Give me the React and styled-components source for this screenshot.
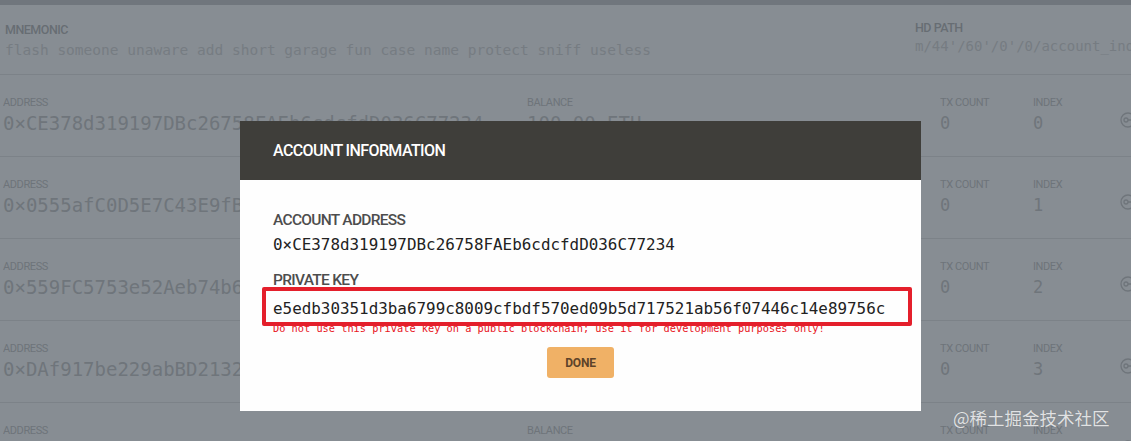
import React from 'react'
import styled, { createGlobalStyle } from 'styled-components'

const GlobalStyle = createGlobalStyle`
  html, body {
    margin: 0;
    padding: 0;
    background: #878d93;
    overflow: hidden;
  }
`

const narrow = `"Roboto", "Liberation Sans", sans-serif`
const mono = `"DejaVu Sans Mono", "Liberation Mono", monospace`

const Page = styled.div`
  position: relative;
  width: 1131px;
  height: 441px;
  overflow: hidden;
  background: #878d93;
  border-top: 5px solid #70767d;
  box-sizing: border-box;
`

const MnemonicBar = styled.div`
  height: 70px;
  display: grid;
  grid-template-columns: 910px 1fr;
  border-bottom: 1px solid #7c8288;
  box-sizing: border-box;
`

const Field = styled.div`
  padding: ${p => p.$top || 0}px 0 0 ${p => p.$left || 0}px;
  white-space: nowrap;
  overflow: hidden;
`

const TopLabel = styled.div`
  font-family: ${narrow};
  font-weight: 500;
  font-size: 12.5px;
  line-height: 15px;
  letter-spacing: -0.5px;
  color: #676d73;
`

const TopValue = styled.div`
  margin-top: ${p => p.$gap || 4}px;
  font-family: ${mono};
  font-size: ${p => p.$size || 14.5}px;
  line-height: 18px;
  color: #767c82;
`

const Row = styled.div`
  height: 82px;
  display: grid;
  grid-template-columns: 524px 413px 93px 87px 1fr;
  padding: 21px 0 0 3px;
  box-sizing: border-box;
  border-bottom: 1px solid #7c8288;
`

const Cell = styled.div`
  white-space: nowrap;
  overflow: hidden;
`

const RowLabel = styled.div`
  font-family: ${narrow};
  font-size: 11px;
  line-height: 13px;
  letter-spacing: -0.4px;
  color: #6e747a;
`

const RowValue = styled.div`
  margin-top: 3px;
  font-family: ${mono};
  font-size: ${p => p.$size || 19}px;
  line-height: 22px;
  color: #6f757b;
`

const KeyIcon = styled.svg`
  margin-top: 16px;
  width: 16px;
  height: 16px;
`

const Modal = styled.div`
  position: absolute;
  left: 240px;
  top: 116px;
  width: 681px;
  background: #fefefe;
`

const ModalHeader = styled.div`
  height: 59px;
  padding: 0 33px;
  display: flex;
  align-items: center;
  background: #3f3e3a;
  color: #ffffff;
  font-family: ${narrow};
  font-weight: 500;
  font-size: 16px;
  letter-spacing: -0.6px;
`

const ModalBody = styled.div`
  padding: 30px 33px 33px;
  display: flex;
  flex-direction: column;
`

const InfoLabel = styled.div`
  margin-top: ${p => p.$gap || 0}px;
  font-family: ${narrow};
  font-weight: 500;
  font-size: 15.5px;
  line-height: 20px;
  letter-spacing: -0.7px;
  color: #4d4d4d;
`

const InfoValue = styled.div`
  margin-top: ${p => p.$gap || 3}px;
  font-family: ${mono};
  font-size: 15.9px;
  line-height: 24px;
  color: #222222;
  white-space: nowrap;
`

const KeyBlock = styled.div`
  position: relative;
  margin-top: 4px;
`

const Highlight = styled.div`
  position: absolute;
  left: -11px;
  top: -7px;
  width: 650px;
  height: 39px;
  border: 4px solid #e41f2b;
  border-radius: 2px;
  box-sizing: border-box;
  pointer-events: none;
`

const Warning = styled.div`
  margin-top: 1px;
  font-family: ${mono};
  font-size: 10.3px;
  line-height: 12px;
  color: #e8141c;
  white-space: nowrap;
`

const DoneButton = styled.button`
  align-self: center;
  margin-top: 13px;
  width: 67px;
  height: 31px;
  border: none;
  border-radius: 3px;
  background: #f0b166;
  color: #5e4329;
  font-family: ${narrow};
  font-weight: 700;
  font-size: 12px;
  letter-spacing: -0.2px;
`

const Watermark = styled.div`
  position: absolute;
  left: 953px;
  top: 402px;
  font-family: "Noto Sans CJK SC", sans-serif;
  font-size: 17.5px;
  line-height: 22px;
  color: rgba(255, 255, 255, 0.78);
  text-shadow: 0 0 1px rgba(0, 0, 0, 0.15);
`

const accounts = [
  { address: '0×CE378d319197DBc26758FAEb6cdcfdD036C77234', balance: '100.00 ETH', tx: '0', index: '0' },
  { address: '0×0555afC0D5E7C43E9fB1d0a7c2b4e8F3a9c61D52', balance: '100.00 ETH', tx: '0', index: '1' },
  { address: '0×559FC5753e52Aeb74b6f8D2c91a4E0b37c5d8A16', balance: '100.00 ETH', tx: '0', index: '2' },
  { address: '0×DAf917be229abBD21325e7c4F0a8b61d93E2C7a4', balance: '100.00 ETH', tx: '0', index: '3' },
  { address: '0×7b2E91c4aD05F3e86C1b94d7A20e5f3C8b6d19E0', balance: '100.00 ETH', tx: '0', index: '4' },
]

const App = () => {
  return (
    <>
      <GlobalStyle />
      <Page>
        <MnemonicBar>
          <Field $top={17} $left={5}>
            <TopLabel>MNEMONIC</TopLabel>
            <TopValue>flash someone unaware add short garage fun case name protect sniff useless</TopValue>
          </Field>
          <Field $top={15} $left={5}>
            <TopLabel>HD PATH</TopLabel>
            <TopValue $gap={2} $size={14}>m/44'/60'/0'/0/account_index</TopValue>
          </Field>
        </MnemonicBar>

        {accounts.map(acc => (
          <Row key={acc.index}>
            <Cell>
              <RowLabel>ADDRESS</RowLabel>
              <RowValue>{acc.address}</RowValue>
            </Cell>
            <Cell>
              <RowLabel>BALANCE</RowLabel>
              <RowValue>{acc.balance}</RowValue>
            </Cell>
            <Cell>
              <RowLabel>TX COUNT</RowLabel>
              <RowValue $size={17}>{acc.tx}</RowValue>
            </Cell>
            <Cell>
              <RowLabel>INDEX</RowLabel>
              <RowValue $size={17}>{acc.index}</RowValue>
            </Cell>
            <Cell>
              <KeyIcon viewBox="0 0 16 16" fill="none" stroke="#6f757b" strokeWidth="1.3">
                <circle cx="8" cy="8" r="7" />
                <circle cx="6" cy="8" r="2" />
                <path d="M8 8h4v2" />
              </KeyIcon>
            </Cell>
          </Row>
        ))}

        <Modal>
          <ModalHeader>ACCOUNT INFORMATION</ModalHeader>
          <ModalBody>
            <InfoLabel>ACCOUNT ADDRESS</InfoLabel>
            <InfoValue>0×CE378d319197DBc26758FAEb6cdcfdD036C77234</InfoValue>
            <InfoLabel $gap={13}>PRIVATE KEY</InfoLabel>
            <KeyBlock>
              <InfoValue $gap={0}>e5edb30351d3ba6799c8009cfbdf570ed09b5d717521ab56f07446c14e89756c</InfoValue>
              <Warning>Do not use this private key on a public blockchain; use it for development purposes only!</Warning>
              <Highlight />
            </KeyBlock>
            <DoneButton>DONE</DoneButton>
          </ModalBody>
        </Modal>

        <Watermark>@稀土掘金技术社区</Watermark>
      </Page>
    </>
  )
}

export default App
